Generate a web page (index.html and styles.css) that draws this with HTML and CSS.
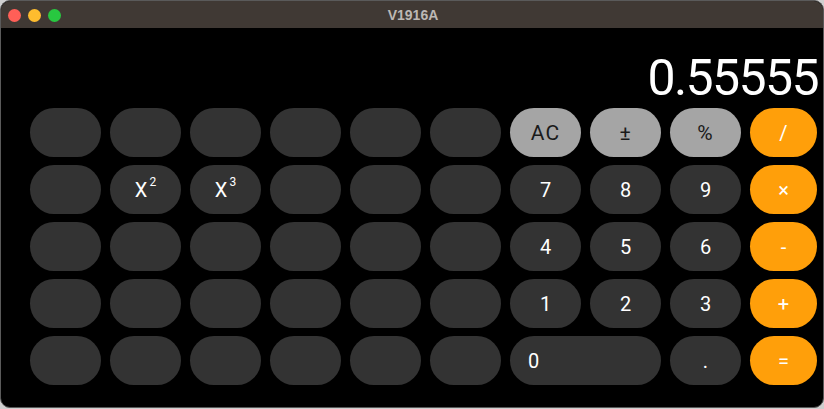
FILE: index.html
```html
<!DOCTYPE html>
<html>
<head>
<meta charset="utf-8">
<link rel="stylesheet" href="styles.css">
</head>
<body>
<div class="window">
  <div class="titlebar">
    <div class="lights">
      <span class="light red"></span>
      <span class="light yellow"></span>
      <span class="light green"></span>
    </div>
    <div class="title">V1916A</div>
  </div>
  <div class="display">0.55555</div>
  <div class="keys">
    <div class="key"></div><div class="key"></div><div class="key"></div><div class="key"></div><div class="key"></div><div class="key"></div>
    <div class="key light-key">AC</div><div class="key light-key">±</div><div class="key light-key">%</div><div class="key op">/</div>

    <div class="key"></div><div class="key">X<sup class="pow">2</sup></div><div class="key">X<sup class="pow">3</sup></div><div class="key"></div><div class="key"></div><div class="key"></div>
    <div class="key">7</div><div class="key">8</div><div class="key">9</div><div class="key op">×</div>

    <div class="key"></div><div class="key"></div><div class="key"></div><div class="key"></div><div class="key"></div><div class="key"></div>
    <div class="key">4</div><div class="key">5</div><div class="key">6</div><div class="key op">-</div>

    <div class="key"></div><div class="key"></div><div class="key"></div><div class="key"></div><div class="key"></div><div class="key"></div>
    <div class="key">1</div><div class="key">2</div><div class="key">3</div><div class="key op">+</div>

    <div class="key"></div><div class="key"></div><div class="key"></div><div class="key"></div><div class="key"></div><div class="key"></div>
    <div class="key zero">0</div><div class="key">.</div><div class="key op">=</div>
  </div>
</div>
</body>
</html>
```
FILE: styles.css
```css
html, body {
  margin: 0;
  padding: 0;
}
body {
  background: #cfcfcf;
  width: 824px;
  height: 409px;
  overflow: hidden;
  font-family: Roboto, "Liberation Sans", sans-serif;
}
.window {
  width: 822px;
  height: 406px;
  border: 1px solid #5a5a5a;
  border-radius: 10px;
  overflow: hidden;
  background: #000;
  display: flex;
  flex-direction: column;
}
.titlebar {
  height: 27px;
  background: #403934;
  display: flex;
  align-items: center;
  position: relative;
  flex-shrink: 0;
}
.lights {
  display: flex;
  gap: 7px;
  padding-left: 7px;
  padding-top: 1px;
}
.light {
  width: 13px;
  height: 13px;
  border-radius: 50%;
  display: block;
}
.red { background: #ff5f57; }
.yellow { background: #febc2e; }
.green { background: #28c840; }
.title {
  position: absolute;
  left: 0;
  right: 0;
  top: 0;
  line-height: 28px;
  text-align: center;
  font-family: "Liberation Sans", Arial, sans-serif;
  font-weight: bold;
  font-size: 14px;
  color: #bdb8b4;
  padding-left: 2px;
}
.display {
  height: 80px;
  box-sizing: border-box;
  padding-top: 25px;
  padding-right: 5px;
  text-align: right;
  color: #fff;
  font-family: Roboto, sans-serif;
  font-weight: 400;
  font-size: 50px;
  line-height: 50px;
  letter-spacing: -1.6px;
  flex-shrink: 0;
}
.keys {
  display: grid;
  grid-template-columns: repeat(9, 71px) 67px;
  grid-auto-rows: 49px;
  column-gap: 9px;
  row-gap: 8px;
  padding-left: 29px;
}
.key {
  background: #333333;
  border-radius: 24px / 24.5px;
  color: #fff;
  font-size: 20px;
  display: flex;
  align-items: center;
  justify-content: center;
}
.light-key {
  background: #a5a5a5;
  color: #1a1a1a;
  font-size: 21px;
  letter-spacing: 1px;
}
.op {
  background: #ff9f0a;
  color: #fff;
}
.zero {
  grid-column: span 2;
  justify-content: flex-start;
  padding-left: 18px;
}
.pow {
  font-size: 12px;
  vertical-align: 0;
  position: relative;
  top: -8px;
  margin-left: 2px;
}
```
